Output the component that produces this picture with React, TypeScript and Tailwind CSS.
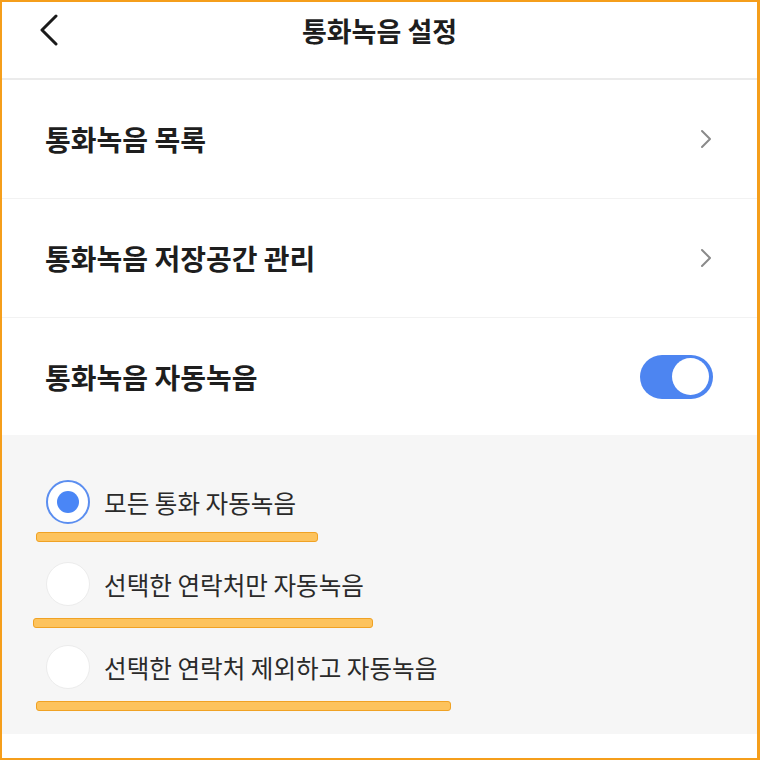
import React from "react";

const font = { fontFamily: '"Noto Sans CJK KR", "Noto Sans", sans-serif' };

function ChevronRight() {
  return (
    <svg width="14" height="20" viewBox="0 0 14 20" fill="none">
      <path d="M3 2 L11 10 L3 18" stroke="#8a8a8a" strokeWidth="2" strokeLinecap="round" strokeLinejoin="round" />
    </svg>
  );
}

function Row({ label, right }: { label: string; right: React.ReactNode }) {
  return (
    <div className="flex h-[119px] items-center justify-between pl-[43px] pr-[44px] border-b border-[#f2f2f2]">
      <span className="text-[28px] font-bold text-[#1e1e1e] leading-none">{label}</span>
      {right}
    </div>
  );
}

function Radio({ checked }: { checked: boolean }) {
  if (checked) {
    return (
      <div className="w-[44px] h-[44px] rounded-full border-[2px] border-[#5b8ef0] bg-white flex items-center justify-center shrink-0">
        <div className="w-[22px] h-[22px] rounded-full bg-[#4a86f6]" />
      </div>
    );
  }
  return <div className="w-[44px] h-[44px] rounded-full border border-[#ececec] bg-white shrink-0" />;
}

function Mark({ width }: { width: string }) {
  return <div className={`h-[10px] rounded-[3px] border-[1.5px] border-[#f0a224] bg-[#fdc35d] ${width}`} />;
}

export default function App() {
  return (
    <div
      className="w-[760px] h-[760px] box-border border-t-2 border-l-2 border-b-2 border-r-[3px] border-[#f59e1b] bg-white flex flex-col overflow-hidden"
      style={font}
    >
      <div className="h-[76px] flex flex-col">
        <div className="h-[56px] grid grid-cols-[1fr_auto_1fr] items-center">
          <div className="pl-[36px] flex items-center">
            <svg width="22" height="32" viewBox="0 0 22 32" fill="none">
              <path d="M18 2 L4 16 L18 30" stroke="#1a1a1a" strokeWidth="3" strokeLinecap="round" strokeLinejoin="round" />
            </svg>
          </div>
          <span className="text-[27px] font-bold text-[#1e1e1e] leading-none">통화녹음 설정</span>
          <div />
        </div>
      </div>
      <div className="h-[2px] bg-[#ebebeb]" />
      <Row label="통화녹음 목록" right={<ChevronRight />} />
      <Row label="통화녹음 저장공간 관리" right={<ChevronRight />} />
      <div className="flex h-[117px] items-center justify-between pl-[43px] pr-[44px]">
        <span className="text-[28px] font-bold text-[#1e1e1e] leading-none">통화녹음 자동녹음</span>
        <div className="w-[73px] h-[44px] rounded-full bg-[#4d85f1] flex items-center justify-end pr-[4px]">
          <div className="w-[37px] h-[37px] rounded-full bg-white" />
        </div>
      </div>
      <div className="bg-[#f6f6f6] pt-[45px] pb-[23px] flex flex-col">
        <div className="flex items-center pl-[44px] gap-[14px]">
          <Radio checked />
          <span className="text-[24.6px] text-[#2a2a2a] leading-none">모든 통화 자동녹음</span>
        </div>
        <div className="mt-[8px] ml-[34px]">
          <Mark width="w-[282px]" />
        </div>
        <div className="mt-[20px] flex items-center pl-[44px] gap-[14px]">
          <Radio checked={false} />
          <span className="text-[24.6px] text-[#2a2a2a] leading-none">선택한 연락처만 자동녹음</span>
        </div>
        <div className="mt-[12px] ml-[31px]">
          <Mark width="w-[340px]" />
        </div>
        <div className="mt-[17px] flex items-center pl-[44px] gap-[14px]">
          <Radio checked={false} />
          <span className="text-[24.6px] text-[#2a2a2a] leading-none">선택한 연락처 제외하고 자동녹음</span>
        </div>
        <div className="mt-[12px] ml-[34px]">
          <Mark width="w-[415px]" />
        </div>
      </div>
      <div className="flex-1 bg-white" />
    </div>
  );
}
